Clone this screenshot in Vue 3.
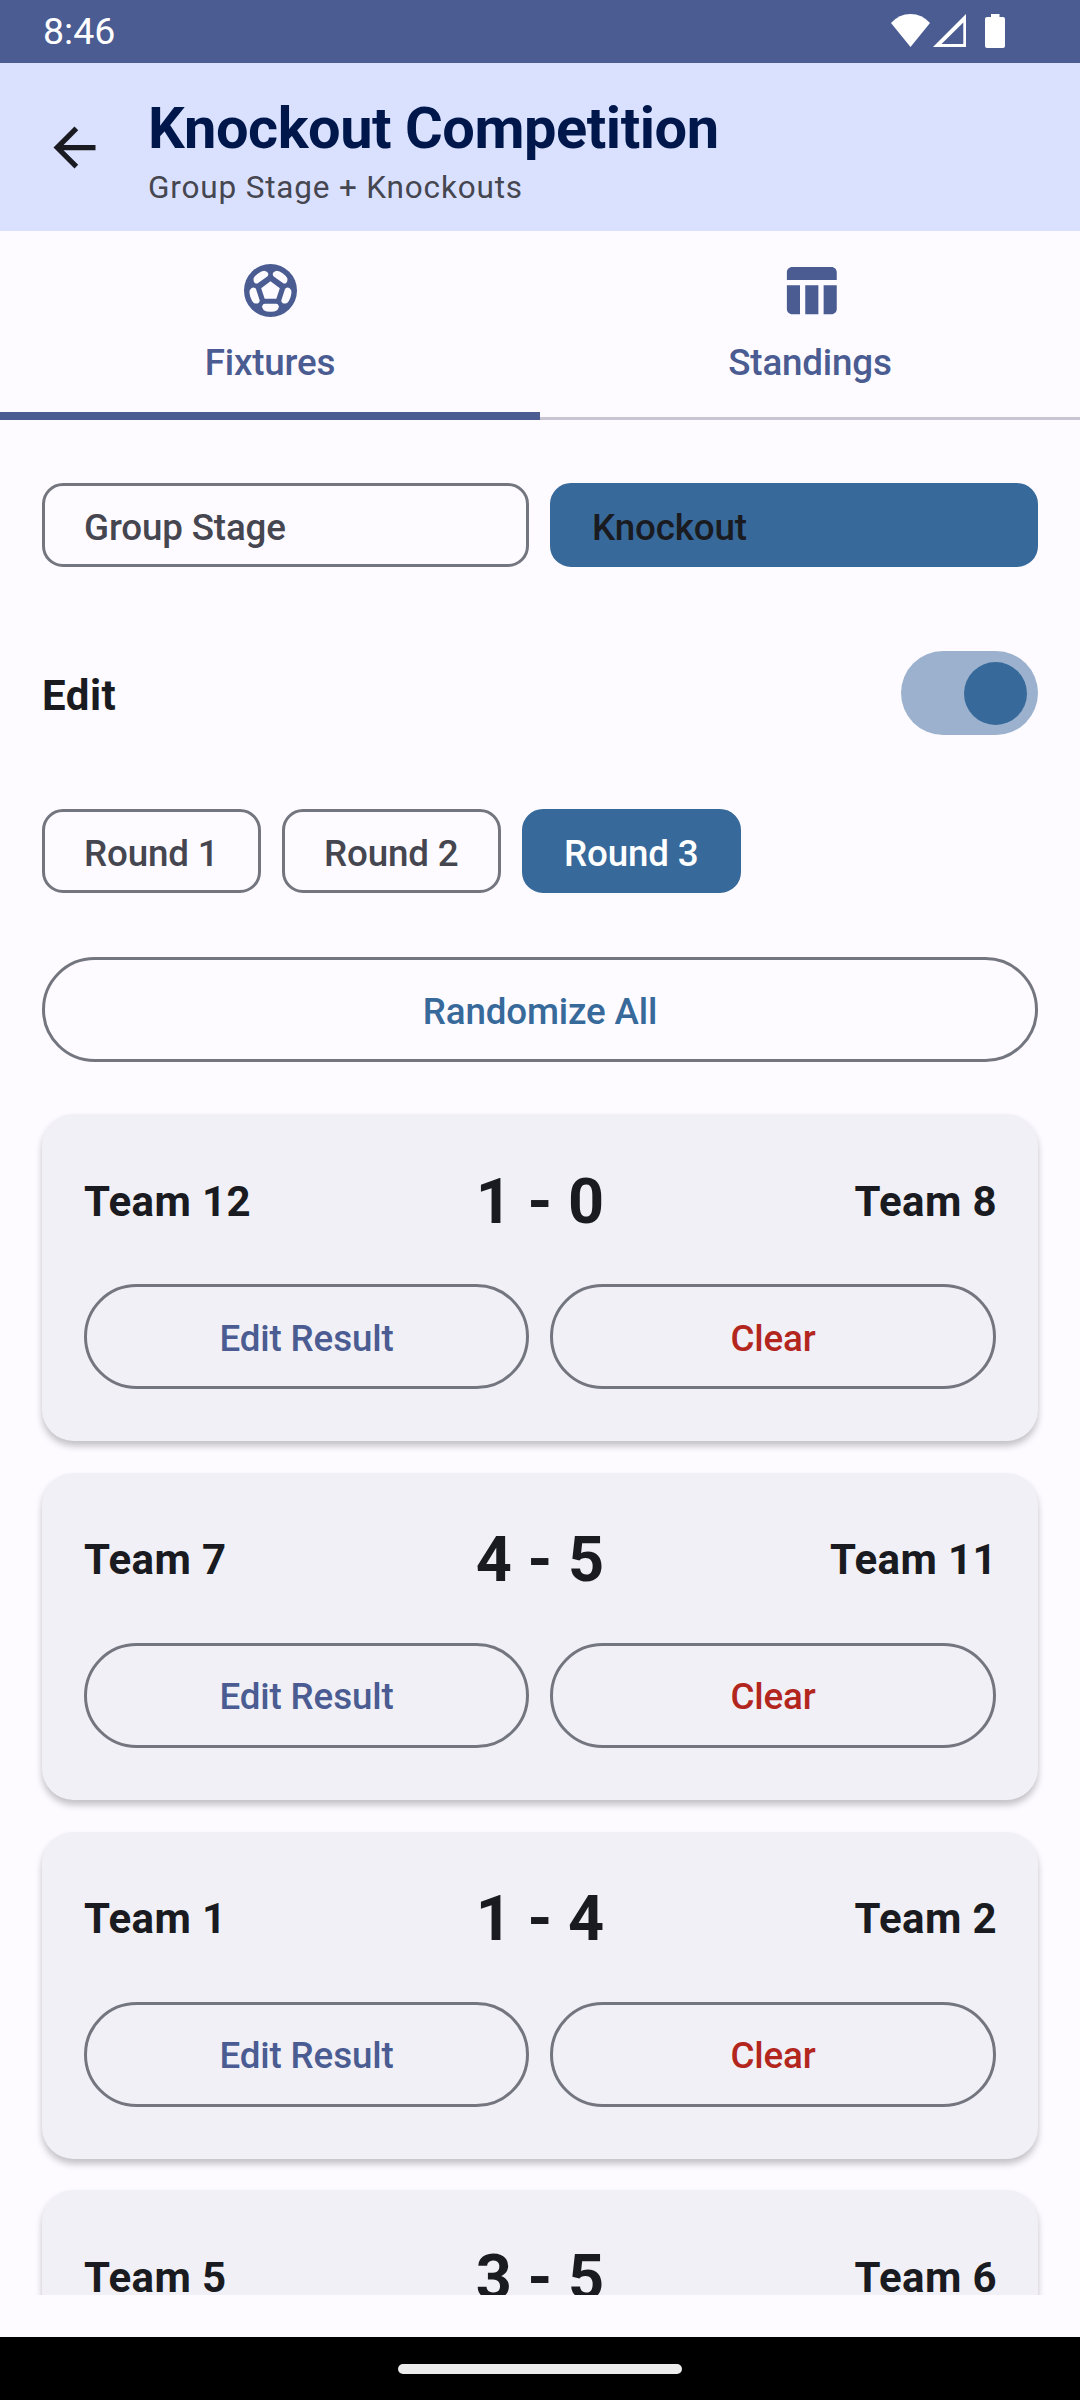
<script setup>
import { ref } from 'vue'

const stages = ['Group Stage', 'Knockout']
const rounds = ['Round 1', 'Round 2', 'Round 3']
const stage = ref('Knockout')
const round = ref('Round 3')
const editing = ref(true)

const matches = [
  { home: 'Team 12', score: '1 - 0', away: 'Team 8' },
  { home: 'Team 7', score: '4 - 5', away: 'Team 11' },
  { home: 'Team 1', score: '1 - 4', away: 'Team 2' },
  { home: 'Team 5', score: '3 - 5', away: 'Team 6' },
]
const panels = [0, 72, 144, 216, 288]
</script>

<template>
  <div class="screen">
    <div class="status">
      <span class="clock">8:46</span>
      <svg class="status-icons" width="116" height="36" viewBox="0 0 116 36" fill="#fff">
        <path d="M0 10 Q8 1 19.5 1 Q31 1 39 10 L19.5 34 Z" />
        <path fill-rule="evenodd" d="M75 1 V34 H42 Z M72.3 9.5 L50.5 31 H72.3 Z" />
        <path d="M100 1 H108.500 V4 H112 Q114 4 114 6 V33 Q114 35 112 35 H96 Q94 35 94 33 V6 Q94 4 96 4 H100 Z" />
      </svg>
    </div>

    <header class="bar">
      <svg class="back" viewBox="0 0 24 24" fill="#1a1b20">
        <path d="M20 11H7.830l5.590-5.590L12 4l-8 8 8 8 1.410-1.410L7.830 13H20v-2z" />
      </svg>
      <div class="heading">
        <h1>Knockout Competition</h1>
        <p>Group Stage + Knockouts</p>
      </div>
    </header>

    <nav class="tabs">
      <div class="tab active">
        <svg class="tab-icon" viewBox="-94.500 -94.500 189 189">
          <circle r="79.500" fill="#4a5c92" />
          <path d="M0 -28 L28 -7 L17.500 25 H-17.500 L-28 -7 Z" fill="#fdfbff" />
          <path
            v-for="angle in panels"
            :key="angle"
            :transform="`rotate(${angle})`"
            fill="#fdfbff"
            d="M-17 40 H17 Q23 40 25 47 Q26 52 20 59 Q13 63.500 0 63.500 Q-13 63.500 -20 59 Q-26 52 -25 47 Q-23 40 -17 40 Z"
          />
        </svg>
        <span>Fixtures</span>
      </div>
      <div class="tab">
        <svg class="tab-icon" viewBox="0 0 24 24" fill="#4a5c92">
          <path d="M10 10.020h5V21h-5V10.020zM17 21h3c1.100 0 2-.9 2-2v-9h-5v11zm3-18H5c-1.100 0-2 .9-2 2v3h19V5c0-1.100-.9-2-2-2zM3 19c0 1.100.9 2 2 2h3V10H3v9z" />
        </svg>
        <span>Standings</span>
      </div>
    </nav>

    <main class="content">
      <div class="stages">
        <button v-for="s in stages" :key="s" class="chip" :class="{ selected: s === stage }" @click="stage = s">{{ s }}</button>
      </div>

      <div class="edit-row">
        <span>Edit</span>
        <button class="switch" :class="{ on: editing }" aria-label="Edit" @click="editing = !editing"><i></i></button>
      </div>

      <div class="rounds">
        <button v-for="r in rounds" :key="r" class="chip" :class="{ selected: r === round }" @click="round = r">{{ r }}</button>
      </div>

      <button class="pill randomize">Randomize All</button>

      <section class="matches">
        <article v-for="m in matches" :key="m.home" class="card">
          <div class="line">
            <span class="team">{{ m.home }}</span>
            <span class="score">{{ m.score }}</span>
            <span class="team away">{{ m.away }}</span>
          </div>
          <div class="actions">
            <button class="pill">Edit Result</button>
            <button class="pill clear">Clear</button>
          </div>
        </article>
      </section>
    </main>

    <footer class="gesture"><div></div></footer>
  </div>
</template>

<style>
body {
  margin: 0;
  background: #fdfbff;
}
</style>

<style scoped>
.screen {
  display: flex;
  flex-direction: column;
  width: 1080px;
  height: 2400px;
  overflow: hidden;
  background: #fdfbff;
  color: #1a1b20;
  font-family: Roboto, "Liberation Sans", sans-serif;
}
button {
  box-sizing: border-box;
  margin: 0;
  background: none;
  font-family: inherit;
  white-space: nowrap;
}
.status {
  display: flex;
  flex: none;
  justify-content: space-between;
  height: 63px;
  padding: 0 73px 0 43px;
  background: #4a5c92;
  color: #fff;
}
.clock {
  font-size: 37.500px;
  line-height: 63px;
}
.status-icons {
  margin-top: 13px;
}
.bar {
  display: flex;
  flex: none;
  height: 168px;
  background: #dae1ff;
}
.back {
  width: 63px;
  height: 63px;
  margin: 53px 42px 0 43px;
}
.heading {
  padding-top: 28px;
}
h1 {
  margin: 0;
  color: #00174b;
  font-size: 57.750px;
  font-weight: 700;
  letter-spacing: -0.470px;
  line-height: 75px;
}
p {
  margin: 0;
  color: #45464f;
  font-size: 31.500px;
  letter-spacing: 0.830px;
  line-height: 44px;
}
.tabs {
  display: flex;
  flex: none;
  height: 189px;
}
.tab {
  display: flex;
  flex: 1;
  flex-direction: column;
  align-items: center;
  gap: 14px;
  box-sizing: border-box;
  padding-top: 28px;
  border-bottom: 3px solid #c7c5d0;
  color: #4a5c92;
  font-size: 36.750px;
  font-weight: 500;
  letter-spacing: -0.170px;
  line-height: 53px;
}
.tab.active {
  border-bottom: 8px solid #4a5c92;
}
.tab-icon {
  flex: none;
  width: 63px;
  height: 63px;
}
.content {
  flex: none;
  box-sizing: border-box;
  height: 1875px;
  padding: 63px 42px 0;
  overflow: hidden;
}
.stages,
.actions {
  display: grid;
  gap: 21px;
}
.stages {
  grid-template-columns: 487px 1fr;
}
.actions {
  grid-template-columns: 445px 1fr;
}
.rounds {
  display: flex;
  gap: 21px;
}
.chip {
  height: 84px;
  padding: 4px 39px 0;
  border: 3px solid #74767f;
  border-radius: 21px;
  color: #45464f;
  font-size: 36.750px;
  font-weight: 500;
  letter-spacing: -0.150px;
  text-align: left;
}
.chip.selected {
  border-color: #37699b;
  background: #37699b;
  color: #1a1b20;
}
.rounds .chip {
  width: 219px;
  padding-right: 0;
}
.rounds .chip.selected {
  color: #fff;
}
.edit-row {
  display: flex;
  align-items: center;
  justify-content: space-between;
  height: 84px;
  margin: 84px 0 74px;
  font-size: 42px;
  font-weight: 700;
  letter-spacing: 0.500px;
}
.edit-row span {
  padding-top: 4px;
}
.switch {
  display: flex;
  align-items: center;
  width: 137px;
  height: 84px;
  padding: 0 11px;
  border: 0;
  border-radius: 42px;
  background: #9bb1cd;
}
.switch i {
  width: 63px;
  height: 63px;
  border-radius: 50%;
  background: #37699b;
}
.switch.on {
  justify-content: flex-end;
}
.pill {
  height: 105px;
  padding: 3px 0 0;
  border: 3px solid #74767f;
  border-radius: 53px;
  color: #4a5c92;
  font-size: 36.750px;
  font-weight: 500;
  letter-spacing: -0.150px;
}
.pill.randomize {
  display: block;
  width: 100%;
  margin: 64px 0 52.300px;
  color: #37699b;
}
.pill.clear {
  color: #b3261e;
}
.matches {
  display: flex;
  flex-direction: column;
  gap: 31.670px;
}
.card {
  box-sizing: border-box;
  height: 327px;
  padding: 45.500px 42px 0;
  border-radius: 31.500px;
  background: #f1f0f7;
  box-shadow: 0 5px 7px rgba(0, 0, 0, 0.23);
}
.line {
  display: grid;
  grid-template-columns: 1fr auto 1fr;
  align-items: center;
  margin-bottom: 40.500px;
  line-height: 84px;
}
.team {
  font-size: 42px;
  font-weight: 700;
  letter-spacing: 0.390px;
}
.away {
  margin-right: -1px;
  text-align: right;
}
.score {
  font-size: 63px;
  font-weight: 700;
}
.gesture {
  display: flex;
  align-items: center;
  justify-content: center;
  flex: none;
  height: 63px;
  margin-top: auto;
  background: #000;
}
.gesture div {
  width: 284px;
  height: 10px;
  border-radius: 5px;
  background: #ececec;
}
</style>
